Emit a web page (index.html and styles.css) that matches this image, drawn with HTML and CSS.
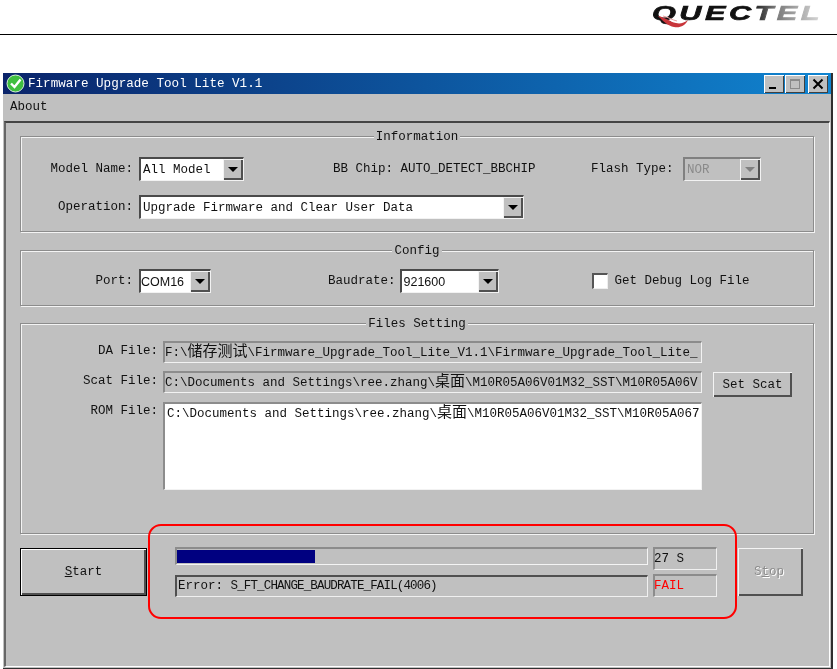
FILE: index.html
```html
<!DOCTYPE html>
<html lang="en">
<head>
    <meta charset="UTF-8">
    <meta name="viewport" content="width=device-width, initial-scale=1.0">
    <title>Firmware Upgrade Tool Lite</title>
    <link rel="stylesheet" href="styles.css">
</head>
<body>
    <header class="page-header">
        <div class="logo">
            <span class="logo-text">QUECTEL</span>
            <svg class="logo-swoosh" width="32" height="14" viewBox="0 0 32 14">
                <path d="M1 1 C8 2 13 7 19 8 C23 9 27 8 31 5 C28 11 23 13 17 12 C11 11 6 6 1 1 Z" fill="#c8353a"/>
                <path d="M6 1 C11 2 15 5 20 6" fill="none" stroke="#e8a0a0" stroke-width="1"/>
            </svg>
        </div>
    </header>

    <div class="window">
        <div class="title-bar">
            <svg class="app-icon" width="19" height="19" viewBox="0 0 19 19">
                <circle cx="9.5" cy="9.5" r="8.5" fill="#3fbf3f" stroke="#d8f0d8"/>
                <path d="M5 9.5 L8.5 13 L14.5 5.5" fill="none" stroke="#fff" stroke-width="2.4"/>
            </svg>
            <span class="title-text">Firmware Upgrade Tool Lite V1.1</span>
            <div class="title-buttons">
                <div class="title-btn">
                    <svg width="12" height="12" viewBox="0 0 12 12"><rect x="1" y="9" width="7" height="2" fill="#000"/></svg>
                </div>
                <div class="title-btn">
                    <svg width="12" height="12" viewBox="0 0 12 12"><rect x="1.5" y="1.5" width="9" height="9" fill="none" stroke="#8a8a8a"/><rect x="1" y="1" width="10" height="2" fill="#8a8a8a"/></svg>
                </div>
                <div class="title-btn close-btn">
                    <svg width="12" height="12" viewBox="0 0 12 12"><path d="M1.5 1.5 L10.5 10.5 M10.5 1.5 L1.5 10.5" stroke="#000" stroke-width="2"/></svg>
                </div>
            </div>
        </div>
        <div class="menu-bar">About</div>

        <div class="client">
            <section class="group group-info">
                <div class="group-title">Information</div>
                <div class="row row-model">
                    <span class="label">Model Name:</span>
                    <div class="combo combo-model"><span class="combo-text">All Model</span><span class="combo-btn"><i class="arrow"></i></span></div>
                    <span class="bb-chip">BB Chip: AUTO_DETECT_BBCHIP</span>
                    <span class="flash-label">Flash Type:</span>
                    <div class="combo combo-flash disabled"><span class="combo-text">NOR</span><span class="combo-btn"><i class="arrow"></i></span></div>
                </div>
                <div class="row row-operation">
                    <span class="label">Operation:</span>
                    <div class="combo combo-operation"><span class="combo-text">Upgrade Firmware and Clear User Data</span><span class="combo-btn"><i class="arrow"></i></span></div>
                </div>
            </section>

            <section class="group group-config">
                <div class="group-title">Config</div>
                <div class="row row-config">
                    <span class="label">Port:</span>
                    <div class="combo combo-port"><span class="combo-text sans">COM16</span><span class="combo-btn"><i class="arrow"></i></span></div>
                    <span class="baud-label">Baudrate:</span>
                    <div class="combo combo-baud"><span class="combo-text sans baud-value">921600</span><span class="combo-btn"><i class="arrow"></i></span></div>
                    <span class="checkbox"></span>
                    <span class="check-label">Get Debug Log File</span>
                </div>
            </section>

            <section class="group group-files">
                <div class="group-title">Files Setting</div>
                <div class="file-row">
                    <span class="file-label">DA File:</span>
                    <div class="file-field">F:\<span class="cjk">储存测试</span>\Firmware_Upgrade_Tool_Lite_V1.1\Firmware_Upgrade_Tool_Lite_</div>
                </div>
                <div class="file-row">
                    <span class="file-label">Scat File:</span>
                    <div class="file-field">C:\Documents and Settings\ree.zhang\<span class="cjk">桌面</span>\M10R05A06V01M32_SST\M10R05A06V</div>
                    <div class="btn set-scat">Set Scat</div>
                </div>
                <div class="file-row">
                    <span class="file-label">ROM File:</span>
                    <div class="file-field rom-field">C:\Documents and Settings\ree.zhang\<span class="cjk">桌面</span>\M10R05A06V01M32_SST\M10R05A067</div>
                </div>
            </section>

            <div class="action-row">
                <div class="btn start-btn"><span><u>S</u>tart</span></div>
                <div class="status-grid">
                    <div class="progress"><div class="progress-fill" style="width: 138px"></div></div>
                    <div class="status-box">27 S</div>
                    <div class="error-box">Error: <span class="tight">S_FT_CHANGE_BAUDRATE_FAIL(4006)</span></div>
                    <div class="status-box fail">FAIL</div>
                </div>
                <div class="btn stop-btn"><span>S<u>t</u>op</span></div>
            </div>

            <div class="red-note"></div>
        </div>
    </div>
</body>
</html>
```
FILE: styles.css
```css
body {
    margin: 0;
    height: 669px;
    overflow: hidden;
    background-color: #fff;
    font-family: "Liberation Mono", monospace;
    font-size: 12.5px;
    color: #111;
}

.page-header {
    height: 34px;
    border-bottom: 1px solid #000;
    position: relative;
}

.logo {
    position: absolute;
    left: 652px;
    top: 1px;
    width: 170px;
    height: 30px;
    filter: blur(0.3px);
}

.logo-text {
    display: inline-block;
    font-family: "Liberation Sans", sans-serif;
    font-weight: bold;
    font-style: italic;
    font-size: 21px;
    line-height: 24px;
    letter-spacing: 2.4px;
    -webkit-text-stroke: 0.7px transparent;
    transform: scaleX(1.46);
    transform-origin: left top;
    background: linear-gradient(to right, #111 0, #111 58%, #777 72%, #ddd 100%);
    -webkit-background-clip: text;
    background-clip: text;
    color: transparent;
}

.logo-swoosh {
    position: absolute;
    left: 5px;
    top: 14px;
}

.window {
    margin: 38px 0 0 3px;
    width: 828px;
    height: 595px;
    background-color: #c0c0c0;
    border-right: 2px solid #303030;
    border-bottom: 1px solid #303030;
    filter: blur(0.3px);
}

.title-bar {
    height: 21px;
    display: flex;
    align-items: center;
    background: linear-gradient(to right, #0a246a, #1084d0);
    color: #fff;
}

.app-icon {
    margin-left: 3px;
}

.title-text {
    margin-left: 3px;
    font-size: 12.6px;
}

.title-buttons {
    margin-left: auto;
    margin-right: 3px;
    display: flex;
    gap: 1px;
}

.title-btn {
    width: 20px;
    height: 18px;
    display: flex;
    align-items: center;
    justify-content: center;
    background-color: #c0c0c0;
    box-shadow: inset 1px 1px 0 #fff, inset -1px -1px 0 #404040;
}

.close-btn {
    margin-left: 2px;
}

.menu-bar {
    height: 27px;
    line-height: 26px;
    padding-left: 7px;
}

.client {
    position: relative;
    box-sizing: border-box;
    margin: 0 1px;
    height: 546px;
    border-top: 2px solid #444;
    border-left: 2px solid #666;
    border-right: 1px solid #fff;
    border-bottom: 1px solid #fff;
}

.group {
    box-sizing: border-box;
    margin-left: 14px;
    width: 794px;
    border: 1px solid #8c8c8c;
    box-shadow: inset 1px 1px 0 #f4f4f4, 1px 1px 0 #f4f4f4;
}

.group-info {
    margin-top: 13px;
    height: 96px;
}

.group-config {
    margin-top: 18px;
    height: 56px;
}

.group-files {
    margin-top: 17px;
    height: 211px;
}

.group-title {
    width: fit-content;
    margin: -8px auto 0;
    padding: 0 2px;
    height: 16px;
    line-height: 16px;
    background-color: #c0c0c0;
}

.row {
    display: flex;
    align-items: center;
    height: 24px;
    white-space: nowrap;
}

.row-model {
    margin-top: 12px;
}

.row-operation {
    margin-top: 14px;
}

.row-config {
    margin-top: 10px;
}

.label {
    width: 112px;
    margin-right: 6px;
    text-align: right;
}

.combo {
    box-sizing: border-box;
    flex-shrink: 0;
    height: 24px;
    display: flex;
    align-items: center;
    justify-content: space-between;
    background-color: #fff;
    border-top: 2px solid #4a4a4a;
    border-left: 2px solid #4a4a4a;
    border-right: 1px solid #f2f2f2;
    border-bottom: 1px solid #f2f2f2;
}

.combo-text {
    padding-left: 2px;
    white-space: nowrap;
}

.combo-text.sans {
    padding-left: 0;
    font-family: "Liberation Sans", sans-serif;
    font-size: 12.5px;
}

.combo-text.baud-value {
    padding-left: 2px;
}

.combo-btn {
    box-sizing: border-box;
    width: 20px;
    height: 21px;
    display: flex;
    align-items: center;
    justify-content: center;
    background-color: #c0c0c0;
    box-shadow: inset 1px 1px 0 #f4f4f4, inset -2px -2px 0 #505050;
}

.arrow {
    display: block;
    width: 0;
    height: 0;
    border-left: 5px solid transparent;
    border-right: 5px solid transparent;
    border-top: 5px solid #000;
}

.combo-model {
    width: 105px;
}

.combo-operation {
    width: 385px;
}

.combo-port {
    width: 72px;
}

.combo-baud {
    width: 99px;
    margin-left: 4px;
}

.combo-flash {
    width: 78px;
    margin-left: 10px;
}

.combo.disabled {
    background-color: #c0c0c0;
    color: #8a8a8a;
    border-top-color: #808080;
    border-left-color: #808080;
}

.combo.disabled .arrow {
    border-top-color: #808080;
}

.bb-chip {
    margin-left: 89px;
    width: 203px;
}

.flash-label {
    margin-left: 55px;
    width: 82px;
}

.baud-label {
    margin-left: 117px;
}

.checkbox {
    box-sizing: border-box;
    width: 16px;
    height: 16px;
    margin-left: 93px;
    background-color: #fff;
    border-top: 2px solid #555;
    border-left: 2px solid #555;
    border-right: 1px solid #eee;
    border-bottom: 1px solid #eee;
}

.check-label {
    margin-left: 7px;
}

.file-row {
    display: flex;
    align-items: flex-start;
    margin-top: 8px;
}

.group-title + .file-row {
    margin-top: 9px;
}

.file-label {
    width: 137px;
    margin-right: 5px;
    text-align: right;
    line-height: 21px;
}

.file-field {
    box-sizing: border-box;
    width: 539px;
    height: 22px;
    line-height: 14px;
    white-space: nowrap;
    overflow: hidden;
    border-top: 2px solid #8c8c8c;
    border-left: 2px solid #8c8c8c;
    border-bottom: 1px solid #f2f2f2;
    border-right: 1px solid #f2f2f2;
}

.rom-field {
    height: 88px;
    margin-top: 1px;
    padding-left: 2px;
    background-color: #fff;
}

.cjk {
    font-family: "Noto Sans CJK SC", sans-serif;
    font-size: 15px;
    line-height: 14px;
}

.btn {
    box-sizing: border-box;
    display: flex;
    align-items: center;
    justify-content: center;
    background-color: #c0c0c0;
}

.set-scat {
    width: 79px;
    height: 25px;
    margin: 1px 0 -4px 11px;
    box-shadow: inset 1px 1px 0 #f4f4f4, inset -2px -2px 0 #505050;
}

.action-row {
    display: flex;
    align-items: flex-start;
    margin: 13px 0 0 14px;
}

.start-btn {
    width: 127px;
    height: 48px;
    margin-top: 1px;
    border: 1px solid #000;
    box-shadow: inset 1px 1px 0 #fff, inset -2px -2px 0 #505050;
}

.stop-btn {
    width: 65px;
    height: 48px;
    margin: 1px 0 0 21px;
    padding-right: 3px;
    color: #8c8c8c;
    text-shadow: 1px 1px 0 #fff;
    box-shadow: inset 1px 1px 0 #f4f4f4, inset -2px -2px 0 #505050;
}

.status-grid {
    margin-left: 28px;
    display: grid;
    grid-template-columns: 473px 64px;
    grid-template-rows: 23px 23px;
    gap: 4px 5px;
}

.progress {
    box-sizing: border-box;
    height: 18px;
    border-top: 2px solid #8c8c8c;
    border-left: 2px solid #8c8c8c;
    border-right: 1px solid #f4f4f4;
    border-bottom: 1px solid #f4f4f4;
    padding-top: 1px;
}

.progress-fill {
    height: 13px;
    background-color: #000080;
}

.status-box {
    box-sizing: border-box;
    line-height: 20px;
    text-indent: -1px;
    white-space: nowrap;
    border-top: 2px solid #8c8c8c;
    border-left: 2px solid #8c8c8c;
    border-right: 1px solid #f0f0f0;
    border-bottom: 1px solid #f0f0f0;
}

.fail {
    color: #f00;
}

.error-box {
    box-sizing: border-box;
    height: 22px;
    margin-top: 1px;
    padding-left: 1px;
    line-height: 18px;
    white-space: nowrap;
    border-top: 2px solid #505050;
    border-left: 2px solid #505050;
    border-right: 1px solid #f0f0f0;
    border-bottom: 1px solid #f0f0f0;
}

.tight {
    letter-spacing: -0.85px;
}

.red-note {
    position: absolute;
    left: 142px;
    top: 401px;
    width: 585px;
    height: 91px;
    border: 2px solid #f00;
    border-radius: 13px;
}
```
